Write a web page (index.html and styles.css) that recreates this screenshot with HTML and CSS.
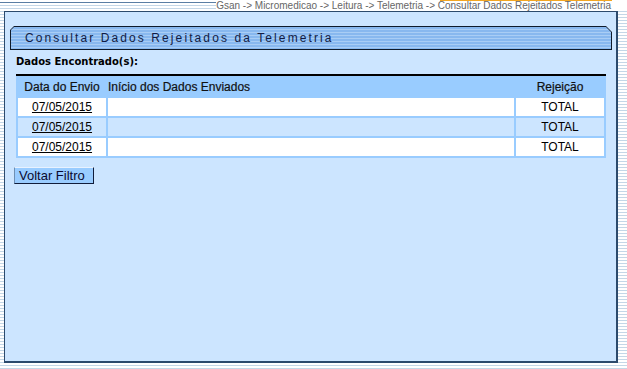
FILE: index.html
```html
<!DOCTYPE html>
<html lang="pt">
<head>
    <meta charset="UTF-8">
    <title>Consultar Dados Rejeitados da Telemetria</title>
<link rel="stylesheet" href="styles.css">
</head>
<body>
    <div class="top">
        <div class="top-line"></div>
        <div class="crumbs">Gsan -&gt; Micromedicao -&gt; Leitura -&gt; Telemetria -&gt; Consultar Dados Rejeitados Telemetria</div>
    </div>

    <div class="panel">
        <div class="title-edge">
            <div class="title">Consultar Dados Rejeitados da Telemetria</div>
        </div>

        <div class="found">Dados Encontrado(s):</div>

        <table class="grid">
            <colgroup>
                <col class="c-date">
                <col>
                <col class="c-rej">
            </colgroup>
            <tr>
                <th>Data do Envio</th>
                <th class="left">Início dos Dados Enviados</th>
                <th>Rejeição</th>
            </tr>
            <tr class="odd">
                <td><a href="#">07/05/2015</a></td>
                <td></td>
                <td>TOTAL</td>
            </tr>
            <tr class="even">
                <td><a href="#">07/05/2015</a></td>
                <td></td>
                <td>TOTAL</td>
            </tr>
            <tr class="odd">
                <td><a href="#">07/05/2015</a></td>
                <td></td>
                <td>TOTAL</td>
            </tr>
        </table>

        <button class="btn" type="button">Voltar Filtro</button>
    </div>
</body>
</html>
```

FILE: styles.css
```css
/*page*/
body{
    margin: 0;
    background: repeating-linear-gradient(#fff 0 2px, #c4d7e7 2px 3px);
    font-family: "Liberation Sans", Arial, sans-serif;
}
.top{
    display: flex;
    height: 11px;
}
.top-line{
    flex: 1;
    margin-top: 2px;
    border-top: 1px solid #5a7ea3;
}
.crumbs{
    padding-right: 16px;
    font-size: 10px;
    line-height: 11px;
    color: #666;
    background: #fff linear-gradient(#f2a521, #f2a521) no-repeat right 15px top 0 / 172px 1px;
    white-space: nowrap;
}
/*panel*/
.panel{
    margin-left: 4px;
    width: 611px;
    height: 349px;
    border: 1px solid #2c4a6c;
    border-width: 1px 2px 2px 1px;
    background-color: #cce5ff;
}
.title-edge{
    margin: 14px 4px 0 5px;
    height: 24px;
    padding: 1px;
    box-sizing: border-box;
    background-color: #0f1b2b;
    clip-path: polygon(4px 0, calc(100% - 6px) 0, 100% 6px, 100% 100%, 0 100%, 0 4px);
}
.title{
    height: 100%;
    padding-left: 14px;
    background: repeating-linear-gradient(#88b8ef 0 2px, #a9cdf5 2px 3px);
    clip-path: polygon(3px 0, calc(100% - 5px) 0, 100% 5px, 100% 100%, 0 100%, 0 3px);
    font-size: 12px;
    line-height: 22px;
    letter-spacing: 2.1px;
    color: #121c44;
}
.found{
    margin: 5px 0 0 11px;
    font: bold 10px/14px "DejaVu Sans", Verdana, sans-serif;
    color: #000;
}
/*table*/
.grid{
    margin: 5px 0 0 11px;
    width: 590px;
    table-layout: fixed;
    border-spacing: 2px;
    border-top: 2px solid #000;
    background-color: #99ccff;
    font-size: 12px;
    color: #000;
}
.c-date{
    width: 88px;
}
.c-rej{
    width: 88px;
}
.grid th,
.grid td{
    padding: 0;
    height: 18px;
    text-align: center;
    font-weight: normal;
}
.grid th{
    color: #111;
    -webkit-text-stroke: 0.2px #111;
}
.grid th.left{
    text-align: left;
}
.odd td{
    background-color: #fff;
}
.even td{
    background-color: #cce5ff;
}
.grid a{
    color: #000;
    text-decoration: underline;
}
/*button*/
.btn{
    display: block;
    margin: 9px 0 0 9px;
    width: 80px;
    height: 17px;
    padding: 0 5px 0 4px;
    box-sizing: border-box;
    text-align: left;
    font-family: "Liberation Sans", Arial, sans-serif;
    font-size: 13px;
    line-height: 14px;
    color: #0a0a30;
    background-color: #99ccff;
    border: 1px solid;
    border-color: #e8f2ff #101c3a #101c3a #6e8fb3;
}
```
